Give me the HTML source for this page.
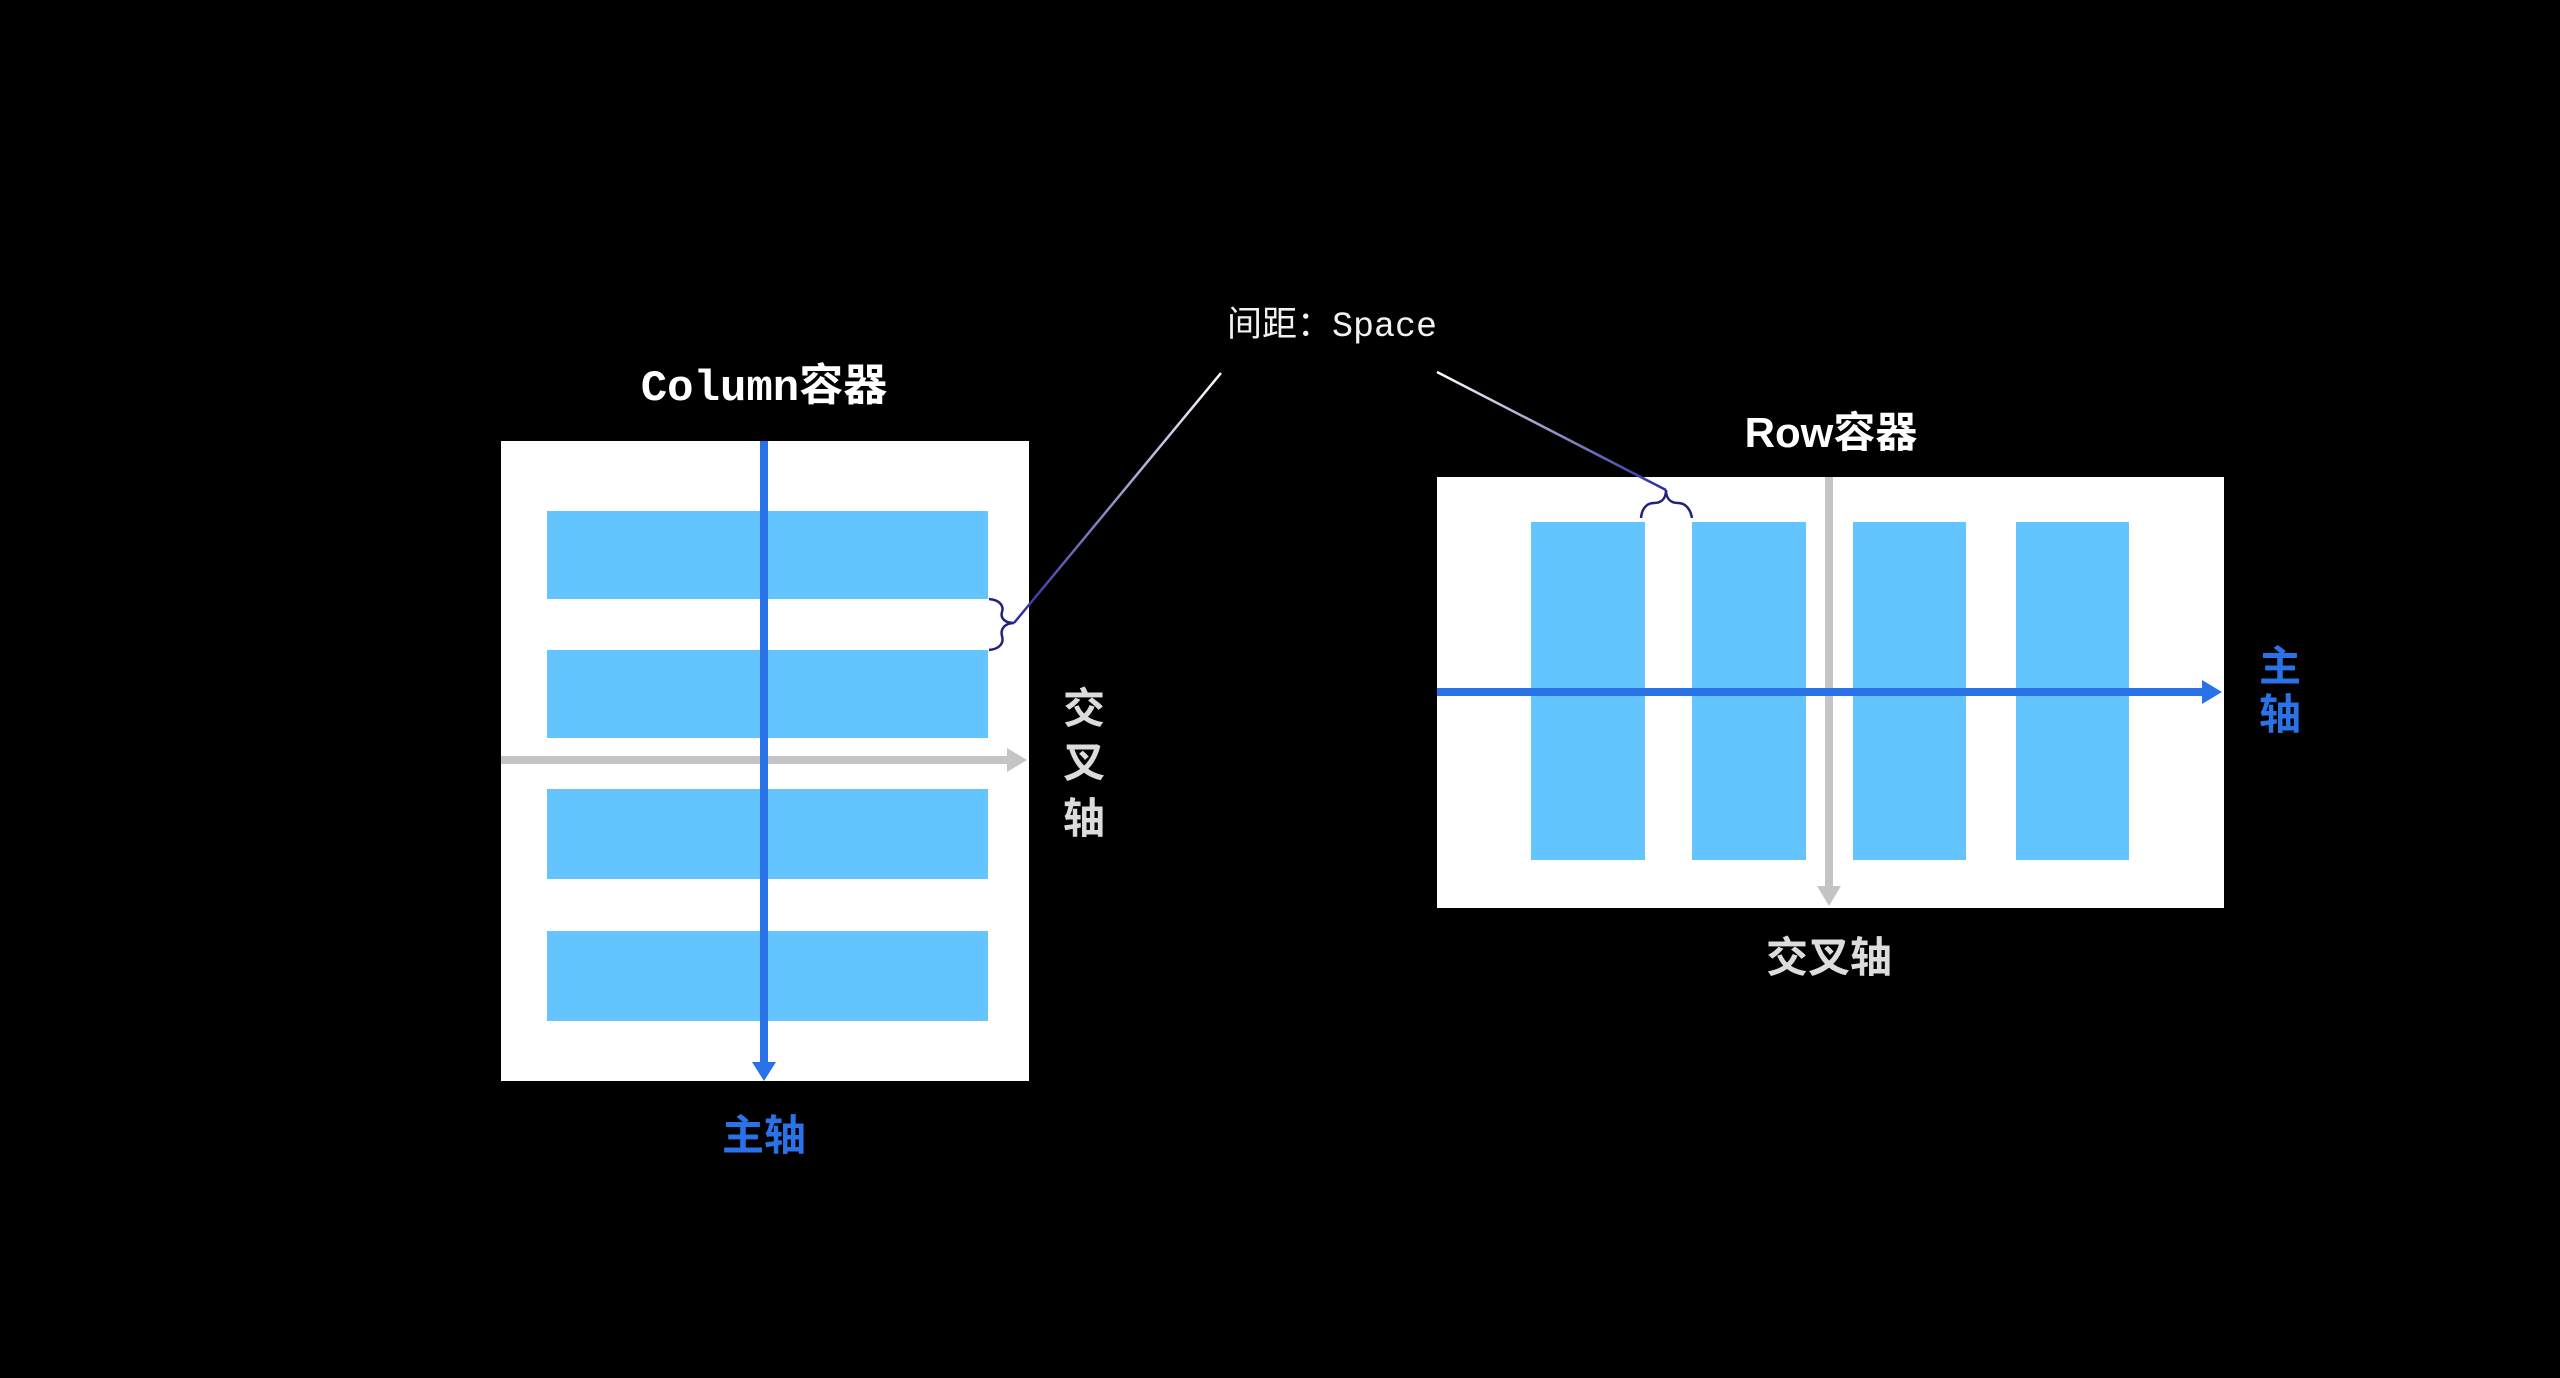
<!DOCTYPE html>
<html><head><meta charset="utf-8"><style>
html,body{margin:0;padding:0;background:#000;width:2560px;height:1378px;overflow:hidden}
svg{display:block}
text{font-family:"Liberation Sans","Noto Sans CJK SC",sans-serif}
</style></head><body>
<svg width="2560" height="1378" viewBox="0 0 2560 1378" xmlns="http://www.w3.org/2000/svg">
<defs>
<linearGradient id="g1" x1="1221" y1="373" x2="1014" y2="623" gradientUnits="userSpaceOnUse"><stop offset="0" stop-color="#fff"/><stop offset="1" stop-color="#2b2a9a"/></linearGradient>
<linearGradient id="g2" x1="1437" y1="372" x2="1666" y2="490" gradientUnits="userSpaceOnUse"><stop offset="0" stop-color="#fff"/><stop offset="1" stop-color="#2b2a9a"/></linearGradient>
</defs>
<!-- Column -->
<rect x="501" y="441" width="528" height="640" fill="#fff"/>
<rect x="547" y="511" width="441" height="88" fill="#64c4fd"/>
<rect x="547" y="650" width="441" height="88" fill="#64c4fd"/>
<rect x="547" y="789" width="441" height="90" fill="#64c4fd"/>
<rect x="547" y="931" width="441" height="90" fill="#64c4fd"/>
<rect x="501" y="756" width="510" height="8" fill="#c4c4c4"/>
<polygon points="1007,748 1027,760 1007,772" fill="#c4c4c4"/>
<rect x="760" y="441" width="8" height="625" fill="#2a72e8"/>
<polygon points="752,1062 776,1062 764,1081" fill="#2a72e8"/>
<path d="M1221 373 L1014 623" stroke="url(#g1)" stroke-width="2.5" fill="none"/>
<path d="M989 599 C1000 600 1004 606 1002 612 C1000 619 1006 623 1014 623 C1006 623 1000 628 1002 636 C1004 643 1000 649 989 650" stroke="#22227a" stroke-width="2.5" fill="none"/>
<text x="764" y="400" fill="#fff" font-size="44" font-weight="bold" text-anchor="middle" style="font-family:'Liberation Mono','Noto Sans CJK SC',monospace">Column容器</text>
<g fill="#dcdcdc" font-size="42" font-weight="bold" text-anchor="middle">
<text x="1084" y="723">交</text><text x="1084" y="777">叉</text><text x="1084" y="833">轴</text>
</g>
<text x="764" y="1150" fill="#2a72e8" font-size="42" font-weight="bold" text-anchor="middle">主轴</text>
<!-- label -->
<text x="1227" y="336" fill="#f2f2f2" font-size="35" style="font-family:'Liberation Mono','Noto Sans CJK SC',monospace">间距：Space</text>
<!-- Row -->
<rect x="1437" y="477" width="787" height="431" fill="#fff"/>
<rect x="1531" y="522" width="114" height="338" fill="#64c4fd"/>
<rect x="1692" y="522" width="114" height="338" fill="#64c4fd"/>
<rect x="1853" y="522" width="113" height="338" fill="#64c4fd"/>
<rect x="2016" y="522" width="113" height="338" fill="#64c4fd"/>
<rect x="1825" y="477" width="8" height="412" fill="#c4c4c4"/>
<polygon points="1817,886 1841,886 1829,906" fill="#c4c4c4"/>
<rect x="1437" y="688" width="770" height="8" fill="#2a72e8"/>
<polygon points="2202,680 2222,692 2202,704" fill="#2a72e8"/>
<path d="M1437 372 L1666 490" stroke="url(#g2)" stroke-width="2.5" fill="none"/>
<path d="M1641 518 C1642 507 1648 503 1654 503 C1661 503 1666 499 1666 490 C1666 499 1671 503 1678 503 C1684 503 1690 507 1692 518" stroke="#22227a" stroke-width="2.5" fill="none"/>
<text x="1831" y="447" fill="#fff" font-size="42" font-weight="bold" text-anchor="middle">Row容器</text>
<g fill="#2a72e8" font-size="42" font-weight="bold" text-anchor="middle">
<text x="2280" y="681">主</text><text x="2280" y="729">轴</text>
</g>
<text x="1829" y="972" fill="#dcdcdc" font-size="42" font-weight="bold" text-anchor="middle">交叉轴</text>
</svg>
</body></html>
